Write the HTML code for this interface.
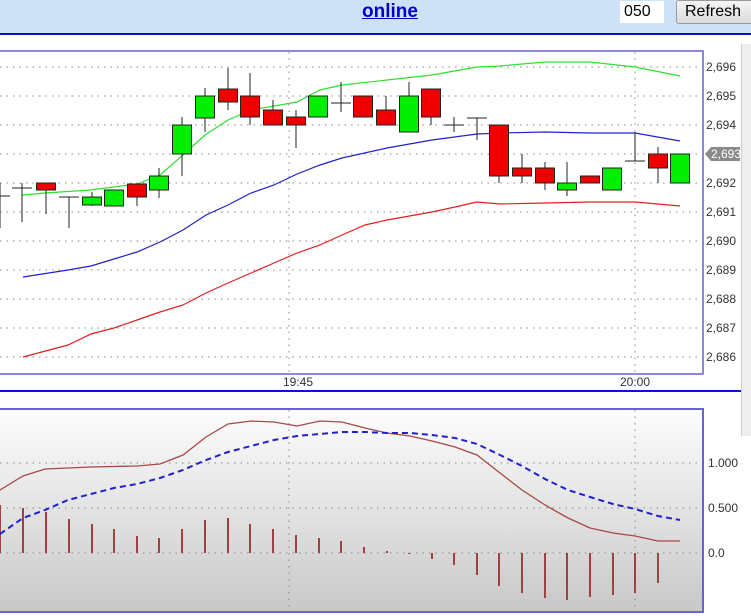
<!DOCTYPE html>
<html><head><meta charset="utf-8"><style>
html,body{margin:0;padding:0;width:751px;height:616px;overflow:hidden;background:#fff;font-family:"Liberation Sans",sans-serif}
#hdr{position:absolute;left:0;top:0;width:751px;height:33px;background:#cfe1f6;border-bottom:2px solid #1010c8}
#on{position:absolute;left:362px;top:1px;font-size:19px;font-weight:bold;color:#0000cc;text-decoration:underline}
#inp{position:absolute;left:620px;top:1px;width:44px;height:22px;background:#fff;font-size:16px;line-height:22px;padding-left:4px;box-sizing:border-box}
#btn{position:absolute;left:676px;top:0px;width:80px;height:24px;background:linear-gradient(#f4f4f4,#dcdcdc);border:1px solid #999;border-radius:3px;font-size:16px;line-height:22px;padding-left:8px;box-sizing:border-box;white-space:nowrap}
#sb{position:absolute;left:741px;top:44px;width:10px;height:392px;background:#eee;border-left:1px solid #ccc}
svg{position:absolute;left:0;top:0}
</style></head><body>
<div id="hdr"><span id="on">online</span><div id="inp">050</div><div id="btn">Refresh</div></div>
<div id="sb"></div>
<svg width="751" height="616" id="s">
<defs><linearGradient id="g" x1="0" y1="0" x2="0" y2="1"><stop offset="0" stop-color="#fdfdfd"/><stop offset="1" stop-color="#c8c8c8"/></linearGradient></defs>
<rect x="-2" y="409" width="705" height="203" fill="url(#g)" stroke="#6464d2" stroke-width="2"/>
<rect x="-2" y="51" width="705" height="323" fill="#fff" stroke="#6464d2" stroke-width="1.5"/>
<line x1="0" y1="391" x2="741" y2="391" stroke="#1010d0" stroke-width="2"/>
<g id="grid" stroke="#888" stroke-width="1" stroke-dasharray="1.5,5"></g>
<g font-size="12" fill="#333">
<text x="706" y="71">2,696</text><text x="706" y="100">2,695</text><text x="706" y="129">2,694</text>
<text x="706" y="187">2,692</text><text x="706" y="216">2,691</text><text x="706" y="245">2,690</text>
<text x="706" y="274">2,689</text><text x="706" y="303">2,688</text><text x="706" y="332">2,687</text><text x="706" y="361">2,686</text>
<text x="283" y="386">19:45</text><text x="620" y="386">20:00</text>
<text x="708" y="467">1.000</text><text x="708" y="512">0.500</text><text x="708" y="557">0.0</text>
</g>
<path d="M705,154 L711,147 H740 V161 H711 Z" fill="#8a8a8a"/>
<text x="711" y="158" font-size="12" fill="#fff">2,693</text>
<polyline fill="none" stroke="#30e030" stroke-width="1.2" points="22,195 45,193 90,190 137,184 160,175 183,155 205,135 228,120 251,110 297,102 320,90 342,85 387,80 432,75 477,67 500,66 545,62 590,62 635,67 680,76"/>
<polyline fill="none" stroke="#2020d0" stroke-width="1.2" points="23,277 68,270 91,266 114,259 137,252 160,242 183,230 206,215 228,205 251,193 274,185 297,174 320,165 342,158 387,148 432,140 477,134 500,133 545,132 590,133 635,133 680,141"/>
<polyline fill="none" stroke="#e02020" stroke-width="1.2" points="23,357 68,345 91,334 114,328 137,320 160,312 183,305 206,293 228,283 251,273 274,263 297,253 320,245 342,235 365,225 387,220 432,212 455,207 477,202 500,204 545,203 590,202 635,202 680,206"/>
<g id="c"></g><g id="h" stroke="#a04040" stroke-width="2"></g>
<polyline fill="none" stroke="#a84848" stroke-width="1.3" points="0,490 23,476 45,469 91,467 137,466 160,464 183,455 206,437 228,424 251,421 274,422 297,426 320,421 342,422 365,428 387,433 410,436 432,441 455,447 477,455 500,473 522,490 545,505 568,518 590,528 613,533 635,536 658,541 680,541"/>
<polyline fill="none" stroke="#2020d0" stroke-width="2" stroke-dasharray="6,4" points="0,534 23,518 45,510 68,500 91,494 114,488 137,484 160,478 183,470 206,460 228,452 251,446 274,440 297,436 320,434 342,432 365,432 387,433 410,433 432,435 455,438 477,444 500,455 522,466 545,479 568,490 590,497 613,504 635,509 658,516 680,520"/>
</svg>
<script>
var g=document.getElementById('grid'),s="";
for(var y=67;y<=357;y+=29)s+='<line x1="0" y1="'+y+'" x2="700" y2="'+y+'"/>';
[463,508,553].forEach(function(y){s+='<line x1="0" y1="'+y+'" x2="700" y2="'+y+'"/>'});
[289,635].forEach(function(x){s+='<line x1="'+x+'" y1="52" x2="'+x+'" y2="373"/><line x1="'+x+'" y1="410" x2="'+x+'" y2="611"/>'});
g.innerHTML=s;
var C=[[0,'x',196,196,183,228],[22,'x',188,188,183,222],[46,'r',183,190,183,214],[69,'x',197,197,197,228],[92,'g',197,205,192,206],[114,'g',190,206,190,206],[137,'r',184,197,184,206],[159,'g',176,190,168,198],[182,'g',125,154,117,176],[205,'g',96,118,88,132],[228,'r',89,102,68,110],[250,'r',96,117,73,125],[273,'r',110,125,100,125],[296,'r',117,125,110,148],[318,'g',96,117,96,117],[341,'x',103,103,82,112],[363,'r',96,117,96,117],[386,'r',110,125,96,125],[409,'g',96,132,82,132],[431,'r',89,117,89,125],[454,'x',125,125,117,132],[477,'x',118,118,118,140],[499,'r',125,176,125,183],[522,'r',168,176,154,183],[545,'r',168,183,162,190],[567,'g',183,190,162,196],[590,'r',176,183,176,183],[612,'g',168,190,168,190],[635,'x',161,161,132,161],[658,'r',154,168,147,183],[680,'g',154,183,154,183]];
var c="";C.forEach(function(k){c+='<line x1="'+k[0]+'" y1="'+k[4]+'" x2="'+k[0]+'" y2="'+k[5]+'" stroke="#222"/>';
if(k[1]=='x')c+='<line x1="'+(k[0]-10)+'" y1="'+k[2]+'" x2="'+(k[0]+10)+'" y2="'+k[2]+'" stroke="#222"/>';
else c+='<rect x="'+(k[0]-9.5)+'" y="'+k[2]+'" width="19" height="'+Math.max(k[3]-k[2],2)+'" fill="'+(k[1]=='g'?'#00ee00':'#ee0000')+'" stroke="#222"/>';});
document.getElementById('c').innerHTML=c;
var H=[[0,505],[23,508],[46,512],[69,519],[92,524],[114,529],[137,536],[159,538],[182,529],[205,520],[228,518],[250,524],[273,529],[296,535],[319,538],[341,541],[364,547],[387,551],[409,554],[432,559],[454,565],[477,575],[499,586],[522,593],[545,598],[567,600],[590,597],[613,595],[635,593],[658,583]];
var h="";H.forEach(function(k){h+='<line x1="'+k[0]+'" y1="553" x2="'+k[0]+'" y2="'+k[1]+'"/>'});
document.getElementById('h').innerHTML=h;
</script>
</body></html>
